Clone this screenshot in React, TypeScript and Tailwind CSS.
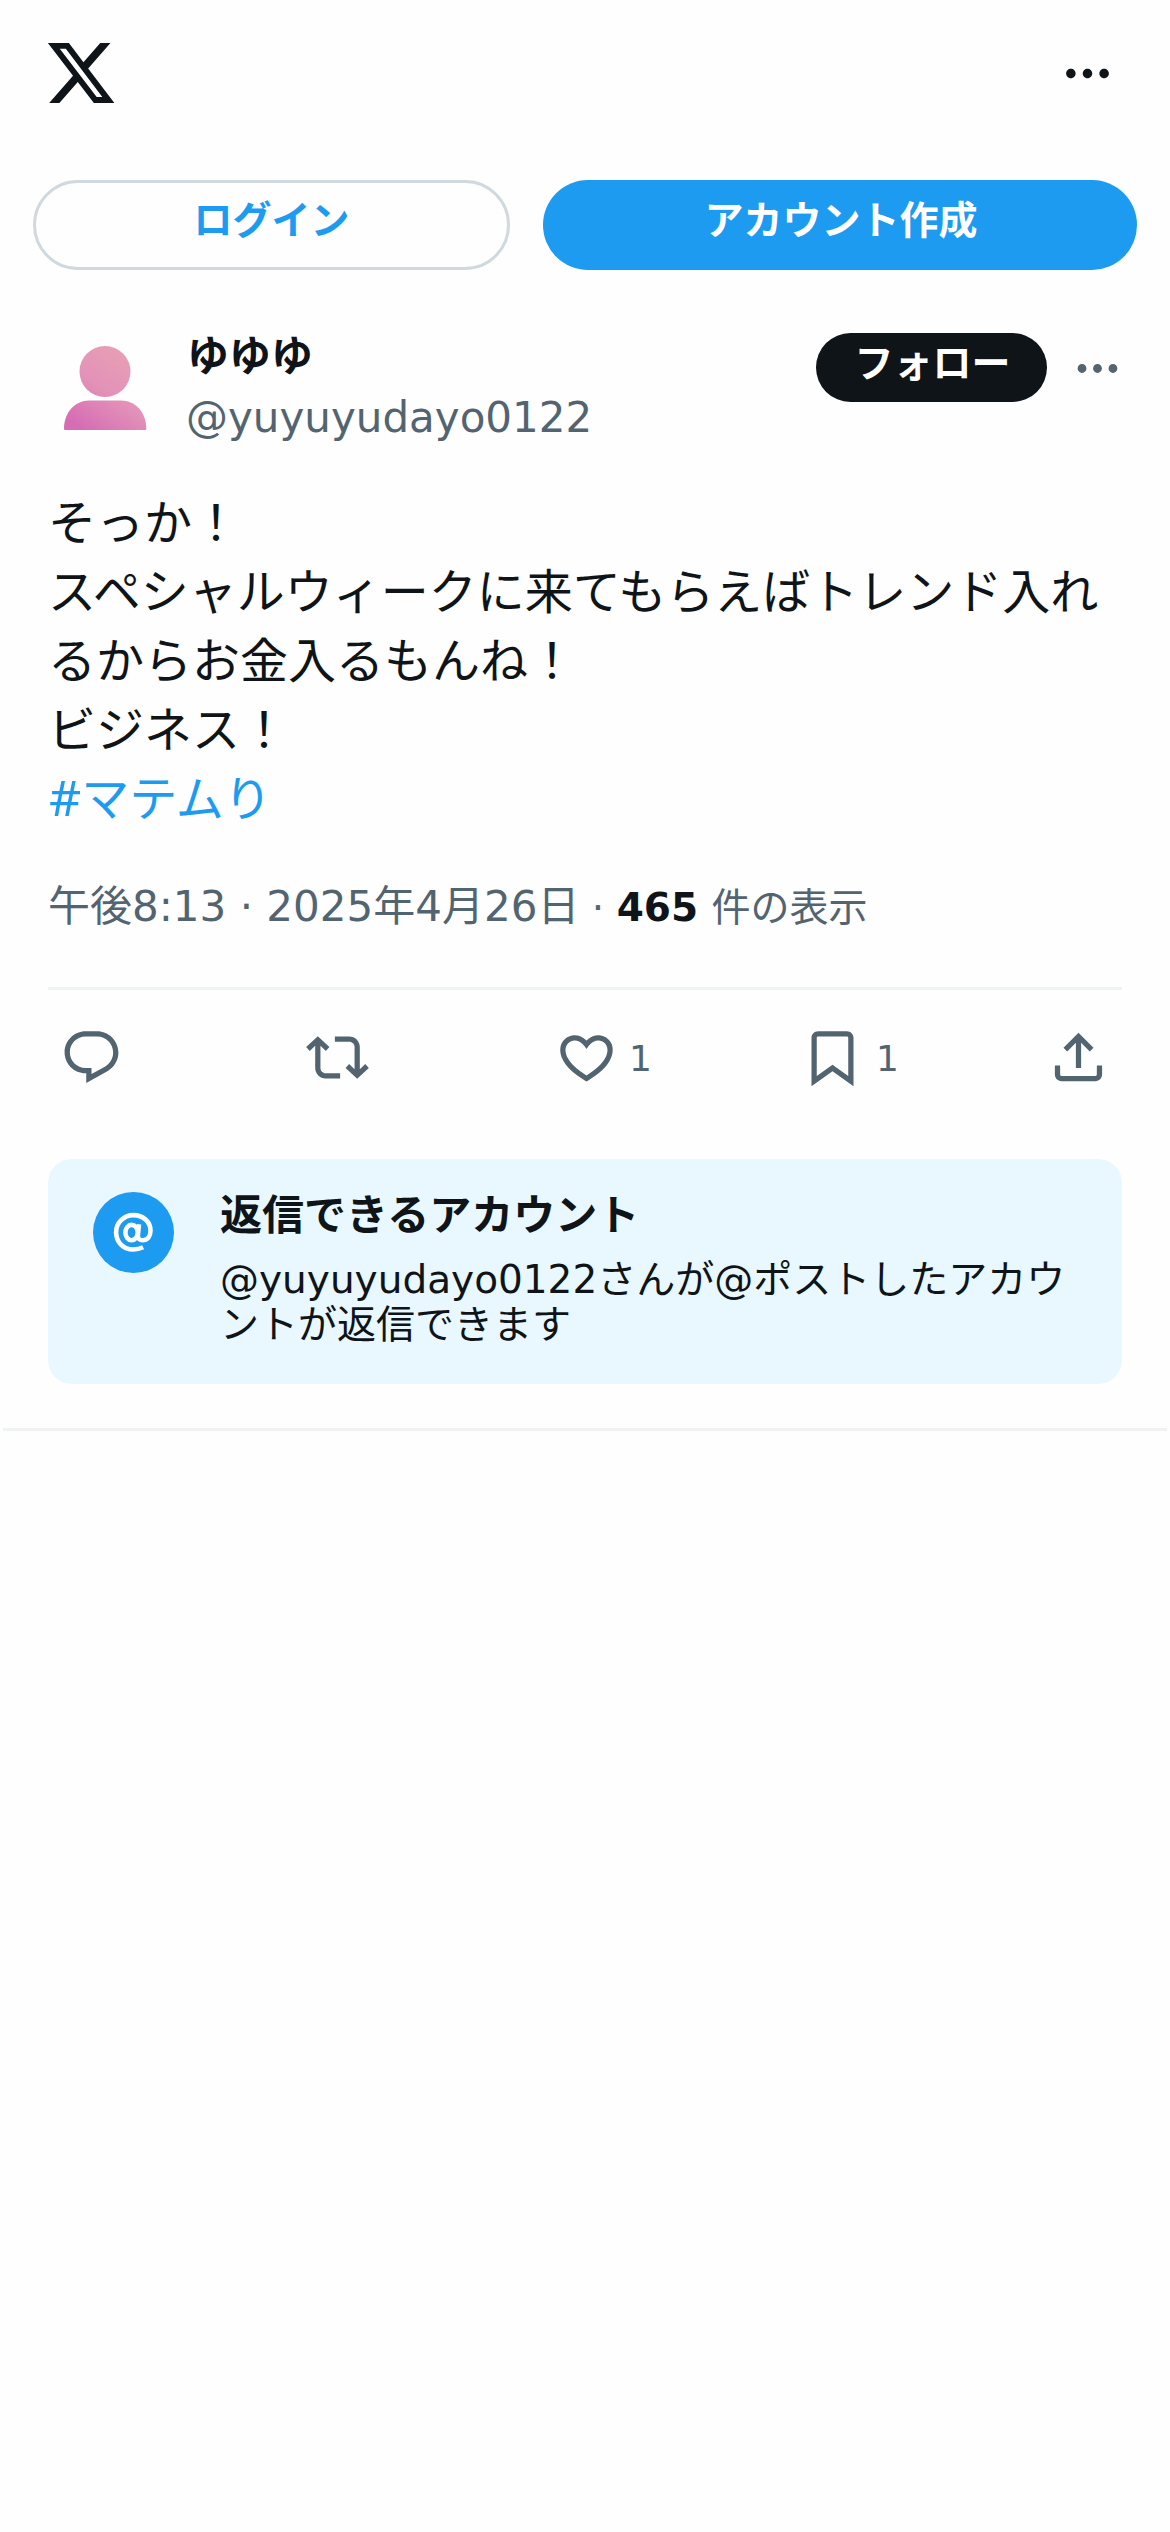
import React from 'react';

const ICONS = {
  logo: 'M18.244 2.25h3.308l-7.227 8.26 8.502 11.24H16.17l-5.214-6.817L4.99 21.75H1.68l7.73-8.835L1.254 2.25H8.08l4.713 6.231zm-1.161 17.52h1.833L7.084 4.126H5.117z',
  more: 'M3 12c0-1.1.9-2 2-2s2 .9 2 2-.9 2-2 2-2-.9-2-2zm9 2c1.1 0 2-.9 2-2s-.9-2-2-2-2 .9-2 2 .9 2 2 2zm7 0c1.1 0 2-.9 2-2s-.9-2-2-2-2 .9-2 2 .9 2 2 2z',
  reply: 'M1.751 10c0-4.42 3.584-8 8.005-8h4.366c4.49 0 8.129 3.64 8.129 8.13 0 2.96-1.607 5.68-4.196 7.11l-8.054 4.46v-3.69h-.067c-4.49.1-8.183-3.51-8.183-8.01zm8.005-6c-3.317 0-6.005 2.69-6.005 6 0 3.37 2.77 6.08 6.138 6.01l.351-.01h1.761v2.3l5.087-2.81c1.951-1.08 3.163-3.13 3.163-5.36 0-3.39-2.744-6.13-6.129-6.13H9.756z',
  repost: 'M4.5 3.88l4.432 4.14-1.364 1.46L5.5 7.55V16c0 1.1.896 2 2 2H13v2H7.5c-2.209 0-4-1.79-4-4V7.55L1.432 9.48.068 8.02 4.5 3.88zM16.5 6H11V4h5.5c2.209 0 4 1.79 4 4v8.45l2.068-1.93 1.364 1.46-4.432 4.14-4.432-4.14 1.364-1.46 2.068 1.93V8c0-1.1-.896-2-2-2z',
  like: 'M16.697 5.5c-1.222-.06-2.679.51-3.89 2.16l-.805 1.09-.806-1.09C9.984 6.01 8.526 5.44 7.304 5.5c-1.243.07-2.349.78-2.91 1.91-.552 1.12-.633 2.78.479 4.82 1.074 1.97 3.257 4.27 7.129 6.61 3.87-2.34 6.052-4.64 7.126-6.61 1.111-2.04 1.03-3.7.477-4.82-.561-1.13-1.666-1.84-2.908-1.91zm4.187 7.69c-1.351 2.48-4.001 5.12-8.379 7.67l-.503.3-.504-.3c-4.379-2.55-7.029-5.19-8.382-7.67-1.36-2.5-1.41-4.86-.514-6.67.887-1.79 2.647-2.91 4.601-3.01 1.651-.09 3.368.56 4.798 2.01 1.429-1.45 3.146-2.1 4.796-2.01 1.954.1 3.714 1.22 4.601 3.01.896 1.81.846 4.17-.514 6.67z',
  bookmark: 'M4 4.5C4 3.12 5.119 2 6.5 2h11C18.881 2 20 3.12 20 4.5v18.44l-8-5.71-8 5.71V4.5zM6.5 4c-.276 0-.5.22-.5.5v14.56l6-4.29 6 4.29V4.5c0-.28-.224-.5-.5-.5h-11z',
  share: 'M12 2.59l5.7 5.7-1.41 1.42L13 6.41V16h-2V6.41l-3.3 3.3-1.41-1.42L12 2.59zM21 15l-.02 3.51c0 1.38-1.12 2.49-2.5 2.49H5.5C4.11 21 3 19.88 3 18.5V15h2v3.5c0 .28.22.5.5.5h12.98c.28 0 .5-.22.5-.5L19 15h2z',
};

interface IconProps {
  name: keyof typeof ICONS;
  className?: string;
}

const Icon: React.FC<IconProps> = ({ name, className }) => (
  <svg viewBox="0 0 24 24" fill="currentColor" aria-hidden="true" className={className}>
    <path d={ICONS[name]} />
  </svg>
);

const Avatar: React.FC = () => (
  <svg viewBox="0 0 114 114" className="h-[114px] w-[114px] shrink-0" aria-hidden="true">
    <defs>
      <linearGradient id="avatarFill" gradientUnits="userSpaceOnUse" x1="76" y1="16" x2="24" y2="92">
        <stop offset="0" stopColor="#e8a0b4" />
        <stop offset="0.5" stopColor="#e392b8" />
        <stop offset="1" stopColor="#d56cb4" />
      </linearGradient>
    </defs>
    <circle cx="57" cy="40.5" r="25.5" fill="url(#avatarFill)" />
    <path d="M16 97.500c0-16 11-28 25-28h32.300c14 0 25 12 25 28 0 1-.5 1.500-1.500 1.500H17.500c-1 0-1.500-.5-1.500-1.500z" fill="url(#avatarFill)" />
  </svg>
);

const Header: React.FC = () => (
  <header>
    <div className="flex h-[146px] items-center justify-between pl-[44px] pr-[54px]">
      <Icon name="logo" className="h-[74px] w-[74px]" />
      <Icon name="more" className="h-[57px] w-[57px]" />
    </div>
    <div className="mt-[34px] flex gap-[33px] px-[33px] text-[39px] font-bold leading-[75px]">
      <button className="h-[90px] w-[477px] rounded-full border-[3px] border-[#cfd9de] pb-[9px] text-[#1d9bf0]">
        ログイン
      </button>
      <button className="h-[90px] flex-1 rounded-full bg-[#1d9bf0] pb-[10px] pl-[2px] text-white">
        アカウント作成
      </button>
    </div>
  </header>
);

const Author: React.FC = () => (
  <div className="flex h-[114px] items-start pl-[48px] pr-[46px]">
    <Avatar />
    <div className="ml-[25px] flex-1">
      <div className="h-[60px] text-[42px] font-bold leading-[51px]">ゆゆゆ</div>
      <div className="-ml-px text-[42px] leading-[54px] text-[#536471]">@yuyuyudayo0122</div>
    </div>
    <button className="mt-[2px] h-[69px] w-[231px] rounded-full bg-[#0f1419] pb-[8px] pl-[2px] text-[39px] font-bold leading-[60px] text-white">
      フォロー
    </button>
    <Icon name="more" className="ml-[24px] mt-[11px] h-[53px] w-[53px] text-[#536471]" />
  </div>
);

const Actions: React.FC = () => (
  <div className="flex h-[138px] items-center pb-[3px] pl-[12px] pr-[12px] text-[36px] text-[#536471]">
    <div className="w-[246px]">
      <Icon name="reply" className="h-[63px] w-[63px]" />
    </div>
    <div className="w-[249px]">
      <Icon name="repost" className="h-[63px] w-[63px]" />
    </div>
    <div className="flex w-[246px] items-center gap-[11px]">
      <Icon name="like" className="h-[63px] w-[63px]" />
      <span className="pt-[2px]">1</span>
    </div>
    <div className="flex w-[246px] items-center gap-[12px]">
      <Icon name="bookmark" className="h-[63px] w-[63px]" />
      <span className="pt-[2px]">1</span>
    </div>
    <Icon name="share" className="h-[63px] w-[63px]" />
  </div>
);

const ReplyNotice: React.FC = () => (
  <div className="mt-[31px] flex h-[225px] rounded-[24px] bg-[#e9f8ff] pl-[45px] pr-[45px] pt-[33px]">
    <div className="h-[81px] w-[81px] shrink-0 rounded-full bg-[#1d9bf0] text-white">
      <svg viewBox="0 0 81 81" fill="none" stroke="currentColor" strokeWidth="4.6" className="h-[81px] w-[81px]">
        <ellipse cx="38.6" cy="40.6" rx="6.2" ry="7.7" />
        <path d="M46 32.300l-1.100 11c-.3 3.200 1.700 5 4.700 5 5 0 7.900-4 7.900-9.500 0-9-7.500-15.700-17.200-15.700-9.500 0-17.200 7.700-17.200 17.200 0 9.800 7.200 17.200 17.200 17.200 3.800 0 7-.8 9.800-2.200" />
      </svg>
    </div>
    <div className="ml-[46px] flex-1">
      <div className="text-[42px] font-bold leading-[48px]">返信できるアカウント</div>
      <p className="mt-[17px] text-[39px] leading-[45px]">
        @yuyuyudayo0122さんが@ポストしたアカウ
        <br />
        ントが返信できます
      </p>
    </div>
  </div>
);

const App: React.FC = () => {
  return (
    <div className="min-h-[2532px] w-[1170px] bg-[#fefefe] font-['DejaVu_Sans','Noto_Sans_CJK_JP',sans-serif] text-[#0f1419]" lang="ja">
      <Header />
      <main className="mx-[3px] border-b-[3px] border-[#eff3f4] pb-[44px]">
        <article className="pt-[61px]">
          <div className="-mx-[3px]">
            <Author />
          </div>
          <div className="px-[45px]">
            <p className="mt-[44px] text-[48px] leading-[69px]">
              そっか！
              <br />
              スペシャルウィークに来てもらえばトレンド入れ
              <br />
              るからお金入るもんね！
              <br />
              ビジネス！
              <br />
              <span className="text-[#1d9bf0]">
                <span className="ml-px font-['Noto_Sans',sans-serif] text-[50px] leading-none">#</span>マテムり
              </span>
            </p>
            <div className="mt-[43px] flex h-[60px] items-baseline whitespace-pre text-[39px] leading-[60px] text-[#536471]">
              <span className="text-[42px]">午後8:13 · 2025年4月26日</span>
              <span> · </span>
              <span className="font-bold text-[#0f1419]">465</span>
              <span className="pl-px"> 件の表示</span>
            </div>
            <div className="mt-[50px] border-t-[3px] border-[#eff3f4]">
              <Actions />
            </div>
            <ReplyNotice />
          </div>
        </article>
      </main>
    </div>
  );
};

export default App;
